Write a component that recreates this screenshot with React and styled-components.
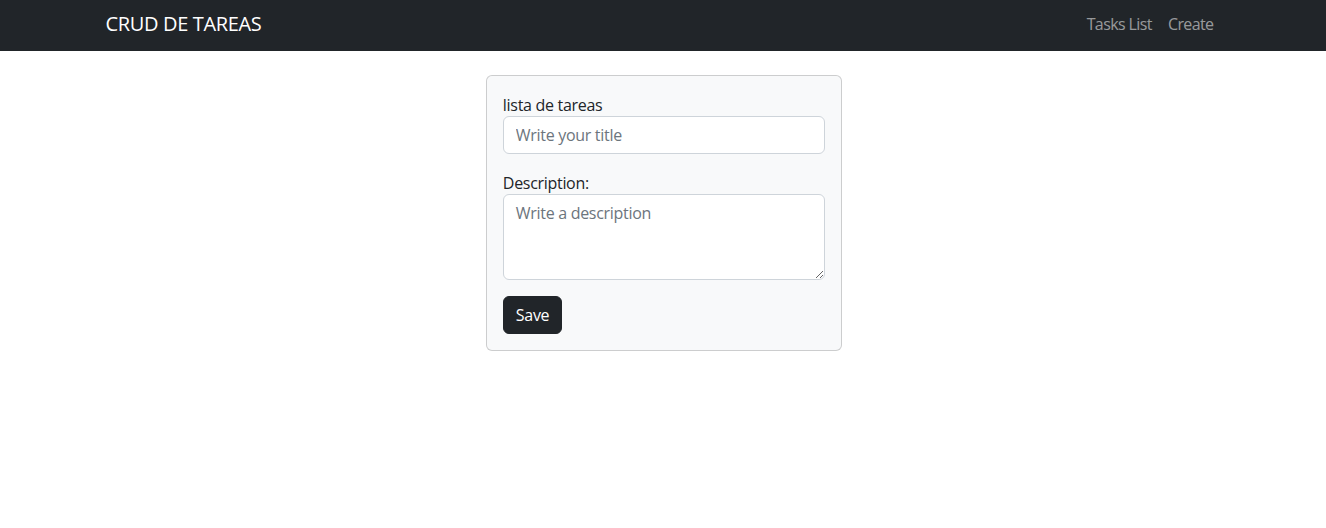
import React from "react";
import styled, { createGlobalStyle } from "styled-components";

const Global = createGlobalStyle`
  * { box-sizing: border-box; }
  body {
    margin: 0;
    font-family: "Open Sans", "Noto Sans", "Liberation Sans", sans-serif;
    font-size: 16px;
    line-height: 1.5;
    color: #212529;
    background: #fff;
  }
`;

const Navbar = styled.nav`
  background: #212529;
  height: 51px;
  display: flex;
  align-items: center;
`;

const Container = styled.div`
  width: 1141px;
  margin: 0 auto;
  padding: 0 12px 0 13px;
  display: flex;
  align-items: center;
  justify-content: space-between;
`;

const Brand = styled.a`
  color: #fff;
  font-size: 20px;
  line-height: 30px;
  text-decoration: none;
  margin-top: -4px;
  letter-spacing: -0.35px;
`;

const Nav = styled.div`
  display: flex;
  margin-top: -4px;
`;

const NavLink = styled.a`
  color: rgba(255, 255, 255, 0.55);
  text-decoration: none;
  padding: 8px;
  line-height: 24px;
  letter-spacing: -0.6px;
`;

const Main = styled.main`
  width: 1141px;
  margin: 0 auto;
  padding: 24px 11px 24px 13px;
  display: grid;
  grid-template-columns: repeat(3, 1fr);
  column-gap: 24px;
`;

const Card = styled.form`
  grid-column: 2;
  background: #f8f9fa;
  border: 1px solid rgba(0, 0, 0, 0.175);
  border-radius: 6px;
  padding: 16px;
  display: flex;
  flex-direction: column;
`;

const Group = styled.div`
  display: flex;
  flex-direction: column;
  margin-bottom: 16px;
`;

const Label = styled.label`
  line-height: 24px;
  padding-top: 1px;
  margin-bottom: -1px;
  letter-spacing: -0.3px;
`;

const fieldStyles = `
  width: 100%;
  font: inherit;
  letter-spacing: -0.3px;
  color: #212529;
  background: #fff;
  border: 1px solid #ced4da;
  border-radius: 6px;
  padding: 6px 12px;
  line-height: 24px;
  outline: none;
  &::placeholder { color: #6c757d; opacity: 1; }
`;

const Input = styled.input`
  ${fieldStyles}
  height: 38px;
`;

const TextArea = styled.textarea`
  ${fieldStyles}
  height: 86px;
  resize: vertical;
  display: block;
`;

const Button = styled.button`
  align-self: flex-start;
  font: inherit;
  letter-spacing: -0.3px;
  color: #fff;
  background: #212529;
  border: 1px solid #212529;
  border-radius: 6px;
  padding: 6px 12px;
  line-height: 24px;
  cursor: pointer;
`;

export default function App() {
  return (
    <>
      <Global />
      <Navbar>
        <Container>
          <Brand href="#">CRUD DE TAREAS</Brand>
          <Nav>
            <NavLink href="#">Tasks List</NavLink>
            <NavLink href="#">Create</NavLink>
          </Nav>
        </Container>
      </Navbar>
      <Main>
        <Card onSubmit={(e) => e.preventDefault()}>
          <Group>
            <Label>lista de tareas</Label>
            <Input placeholder="Write your title" />
          </Group>
          <Group>
            <Label>Description:</Label>
            <TextArea rows={3} placeholder="Write a description" />
          </Group>
          <Button type="submit">Save</Button>
        </Card>
      </Main>
    </>
  );
}
